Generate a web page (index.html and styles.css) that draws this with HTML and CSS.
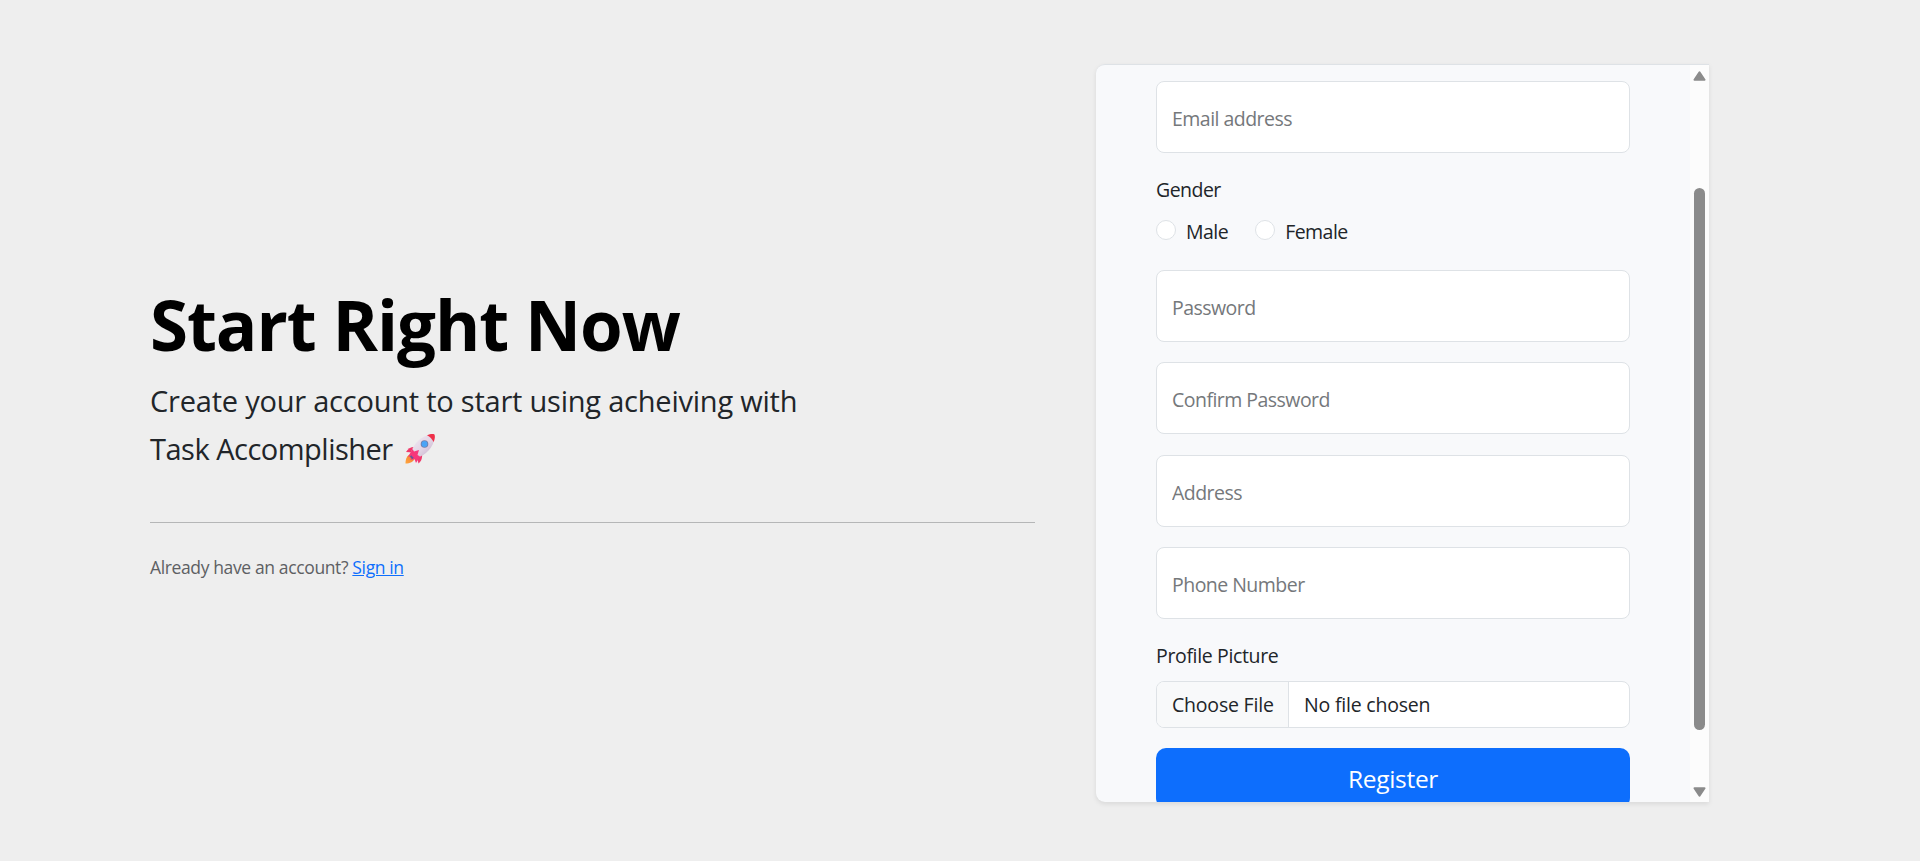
FILE: index.html
```
<!DOCTYPE html>
<html lang="en">
<head>
<meta charset="utf-8">
<title>Register</title>
<link rel="stylesheet" href="styles.css">
</head>
<body>
<main class="page">
  <section class="intro">
    <h1 class="title">Start Right Now</h1>
    <p class="lead">Create your account to start using acheiving with<br><span class="product">Task Accomplisher</span>
      <svg class="rocket" viewBox="0 0 32 32" aria-hidden="true">
        <defs>
          <linearGradient id="hull" x1="0" y1="0" x2="1" y2="1"><stop offset="0" stop-color="#f3eef6"/><stop offset=".55" stop-color="#e2d3e4"/><stop offset="1" stop-color="#bfa9c6"/></linearGradient>
          <linearGradient id="flame" x1="1" y1="0" x2="0" y2="1"><stop offset="0" stop-color="#f0703a"/><stop offset="1" stop-color="#ffa83c"/></linearGradient>
        </defs>
        <path d="M7 21C3 22 1.500 26 1.500 30.500C6 30.500 9.500 29 11 25Z" fill="url(#flame)"/>
        <path d="M12 14C7 13.500 4 15.500 2 19L9 19.500Z" fill="#f0386b"/>
        <path d="M18 20C18.500 25 17.500 28 14.500 30.500L12.500 23Z" fill="#f0386b"/>
        <path d="M6.500 21.500C8 14 14 5 24 2L30 8C27 18 18 24 10.500 25.500Z" fill="url(#hull)"/>
        <path d="M23 2.300C26 1 29 .8 30.500 1.500C31.200 3 31 6 29.700 9C28 6 26 4 23 2.300Z" fill="#ef3049"/>
        <path d="M4 24L8.500 16L10 18.500L15 17L13.500 22L16 23.500L12 30L10.500 26L6.500 27L7.500 23Z" fill="#f7377a"/>
        <path d="M6.500 23L9 25.500" stroke="#69549b" stroke-width="2"/>
        <circle cx="20.500" cy="11" r="3.800" fill="#747fa9"/>
        <circle cx="20.500" cy="11" r="2.900" fill="#4aa4f7"/>
      </svg>
    </p>
    <hr class="rule">
    <p class="signin">Already have an account? <a class="link" href="#">Sign in</a></p>
  </section>
  <section class="card">
    <form class="form">
      <input class="field" type="email" placeholder="Email address">
      <div class="label">Gender</div>
      <div class="options">
        <label class="option"><span class="radio"></span>Male</label>
        <label class="option"><span class="radio"></span>Female</label>
      </div>
      <input class="field" type="password" placeholder="Password">
      <input class="field" type="password" placeholder="Confirm Password">
      <input class="field" type="text" placeholder="Address">
      <input class="field" type="text" placeholder="Phone Number">
      <div class="label picture">Profile Picture</div>
      <div class="file"><span class="choose">Choose File</span><span class="chosen">No file chosen</span></div>
      <button class="submit" type="button">Register</button>
    </form>
    <div class="scrollbar">
      <svg class="arrow" viewBox="0 0 13 10"><path d="M6.500 1.300L11.500 8.700H1.500Z" fill="#8b8b8b" stroke="#8b8b8b" stroke-width="2" stroke-linejoin="round"/></svg>
      <div class="thumb"></div>
      <svg class="arrow" viewBox="0 0 13 10"><path d="M6.500 8.700L11.500 1.300H1.500Z" fill="#8b8b8b" stroke="#8b8b8b" stroke-width="2" stroke-linejoin="round"/></svg>
    </div>
  </section>
</main>
</body>
</html>
```
FILE: styles.css
```
* { box-sizing: border-box; }
body {
  margin: 0;
  height: 861px;
  overflow: hidden;
  background: #eee;
  color: #212529;
  font-family: "Open Sans", "Noto Sans", sans-serif;
  font-size: 19.5px;
  line-height: 30px;
  letter-spacing: -0.53px;
}
.page { display: flex; gap: 61px; height: 861px; padding: 64px 0 0 150px; }
.intro { width: 885px; padding-top: 216px; }
.title {
  margin: 0;
  color: #000;
  font-size: 69px;
  line-height: 88px;
  font-weight: 700;
  letter-spacing: -1.05px;
  white-space: nowrap;
}
.lead { height: 96px; margin: 9px 0 0; font-size: 29px; line-height: 48px; letter-spacing: -0.22px; white-space: nowrap; }
.product { letter-spacing: -0.5px; }
.rocket { width: 32px; height: 32px; margin-left: 4px; vertical-align: -5px; }
.rule { height: 1px; margin: 49px 0 29px; border: 0; background: #b5b6b7; }
.signin { margin: 0; color: #5d6063; font-size: 17.5px; letter-spacing: -0.37px; }
.link { color: #0d6efd; text-decoration: underline; }
.card {
  display: flex;
  justify-content: space-between;
  width: 613px;
  height: 738px;
  overflow: hidden;
  border-top: 1px solid #dee2e6;
  border-radius: 9px 0 0 9px;
  background: #f8f9fb;
  box-shadow: 0 2px 5px rgba(0, 0, 0, .09);
}
.form { display: flex; flex-direction: column; width: 534px; padding: 16px 0 0 60px; }
.field {
  flex: none;
  width: 474px;
  height: 72px;
  margin: 0 0 20.4px;
  padding: 3px 15px 0;
  border: 1px solid #dee2e6;
  border-radius: 8px;
  background: #fff;
  color: #212529;
  font: inherit;
  letter-spacing: inherit;
}
.field::placeholder { color: #75787b; opacity: 1; }
.label { height: 30px; margin-top: 1.6px; }
.options { display: flex; gap: 26px; height: 30px; margin: 12px 0 23px; }
.option { display: flex; gap: 10px; }
.option + .option { margin-left: 1px; }
.radio { width: 20px; height: 20px; margin-top: 3px; border: 1px solid #dee2e6; border-radius: 50%; background: #fff; }
.picture { margin-top: 1.5px; letter-spacing: -0.35px; }
.file {
  display: flex;
  flex: none;
  height: 47px;
  margin: 10px 0 20px;
  overflow: hidden;
  border: 1px solid #dee2e6;
  border-radius: 8px;
  background: #fff;
  line-height: 46px;
  letter-spacing: -0.2px;
}
.choose { width: 132px; padding-left: 15px; border-right: 1px solid #dee2e6; background: #f8f9fa; white-space: nowrap; }
.chosen { padding-left: 15px; }
.submit {
  flex: none;
  height: 60px;
  padding: 2px 0 0;
  border: 0;
  border-radius: 10px;
  background: #0d6efd;
  color: #fff;
  font: 24.5px/30px "Open Sans", sans-serif;
  letter-spacing: -0.3px;
}
.scrollbar { display: flex; flex-direction: column; align-items: center; justify-content: space-between; width: 19px; padding: 6px 0 5px; background: #fcfcfc; }
.arrow { width: 13px; height: 10px; }
.thumb { width: 11px; height: 542px; margin-top: 50px; border-radius: 6px; background: #8b8b8b; }
```
